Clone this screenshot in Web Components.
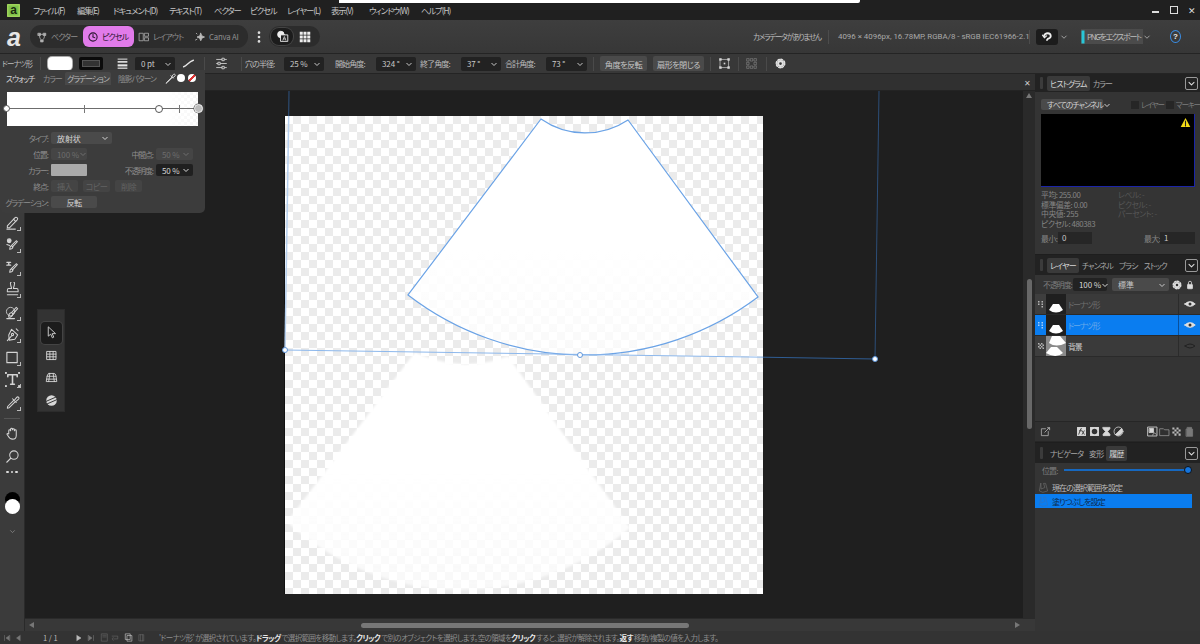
<!DOCTYPE html>
<html lang="ja"><head><meta charset="utf-8"><title>Affinity</title>
<style>html,body{margin:0;height:100%;background:#1f1f1f;overflow:hidden}app-shell{font-family:"Noto Sans CJK JP","Liberation Sans",sans-serif}</style>
</head><body><app-shell></app-shell>
<script>
const I={
vector:'<path d="M3 3h3v3H3zM10 3h3v3h-3zM6.500 12h3v2.500h-3z" fill="currentColor"/><path d="M6 4.500h4M4.500 6Q4.500 10 7 12M11.500 6Q11.500 10 9 12"/>',
pixel:'<circle cx="8" cy="8" r="5.500" stroke-width="1.400"/><path d="M8 8V4.500M8 8l2.500 1" stroke-width="1.300"/>',
layout:'<rect x="2" y="3" width="5" height="10"/><rect x="9" y="3" width="5" height="4"/><rect x="9" y="9" width="5" height="4"/>',
spark:'<path d="M9 3l1.500 3.500L14 8l-3.500 1.500L9 13 7.500 9.500 4 8l3.500-1.500z" fill="currentColor"/><path d="M3 3l1 1M2 12l2-1" />',
grid:'<g fill="currentColor" stroke="none"><rect x="1" y="1" width="4" height="4"/><rect x="6" y="1" width="4" height="4"/><rect x="11" y="1" width="4" height="4"/><rect x="1" y="6" width="4" height="4"/><rect x="6" y="6" width="4" height="4"/><rect x="11" y="6" width="4" height="4"/><rect x="1" y="11" width="4" height="4"/><rect x="6" y="11" width="4" height="4"/><rect x="11" y="11" width="4" height="4"/></g>',
mode:'<circle cx="6" cy="5.500" r="4" fill="currentColor"/><rect x="6" y="6" width="8.500" height="8" fill="#222" stroke="currentColor"/><path d="M8.500 12.500l1.800-4.500 1.800 4.500M9.200 11h2.200" stroke-width=".8"/>',
kebab:'<g fill="currentColor" stroke="none"><circle cx="8" cy="3" r="1.500"/><circle cx="8" cy="8" r="1.500"/><circle cx="8" cy="13" r="1.500"/></g>',
weight:'<g fill="currentColor" stroke="none"><rect x="2" y="2" width="12" height="1.200"/><rect x="2" y="5" width="12" height="2"/><rect x="2" y="9" width="12" height="2.600"/><rect x="2" y="13" width="12" height="1.500"/></g>',
stroke:'<path d="M2 12C6 11 8 6 14 4" stroke-width="1.700"/>',
sliders:'<path d="M2 3h12M2 8h12M2 13h12"/><g fill="#3a3a3a"><rect x="9" y="1.500" width="2.400" height="3"/><rect x="4" y="6.500" width="2.400" height="3"/><rect x="9" y="11.500" width="2.400" height="3"/></g>',
frame:'<path d="M3 3h10v10H3z" stroke-width=".8"/><g fill="currentColor" stroke="none"><rect x="1.500" y="1.500" width="3" height="3"/><rect x="11.500" y="1.500" width="3" height="3"/><rect x="1.500" y="11.500" width="3" height="3"/><rect x="11.500" y="11.500" width="3" height="3"/><rect x="7" y="7" width="2" height="2"/></g>',
dgrid:'<path d="M2 2h3v3H2zM6.500 2h3v3h-3zM11 2h3v3h-3zM2 6.500h3v3H2zM11 6.500h3v3h-3zM2 11h3v3H2zM6.500 11h3v3h-3zM11 11h3v3h-3z" stroke-width=".7" stroke-dasharray="1 .7"/>',
gear:'<circle cx="8" cy="8" r="6" stroke-width="2.400" stroke-dasharray="2.300 2.410"/><path fill-rule="evenodd" fill="currentColor" stroke="none" d="M8 3a5 5 0 1 0 0 10A5 5 0 0 0 8 3zM8 6a2 2 0 1 1 0 4 2 2 0 0 1 0-4z"/>',
drop:'<path d="M10 6L3.500 12.500 2.500 14l1.500-1L10.500 6.500M8.500 4.500l3 3M9.500 5.500l2-2.500a1.400 1.400 0 0 1 2 2l-2.500 2"/>',
undo:'<path d="M4 7Q5 3 9 3q4 0 4 3.500 0 2.500-4 4L8 12" stroke-width="2.400"/><path d="M2 5.500l2.500 3.500 3-2.500" stroke-width="1.600"/>',
eye:'<path d="M1 8Q8 1.500 15 8 8 14.500 1 8z" fill="currentColor"/><circle cx="8" cy="8" r="2" fill="#333" stroke="none"/>',
eyeoff:'<path d="M1.500 8Q8 2.500 14.500 8 8 13.500 1.500 8z" stroke-width="1.200"/>',
lock:'<rect x="4" y="7" width="8" height="7" rx="1" fill="currentColor"/><path d="M5.500 7V4.500a2.500 2.500 0 0 1 5 0V7" stroke-width="1.300"/>',
warn:'<path d="M8 1.500L15 14.500H1z" fill="#f4dc16" stroke="none"/><path d="M8 6v4.500M8 11.800v1.200" stroke="#222" stroke-width="1.600"/>',
chev:'<path d="M3.500 6L8 10.500 12.500 6" stroke-width="1.800"/>',
pencil:'<path d="M2.500 11.500L10.500 3a1.600 1.600 0 0 1 2.500 2.300L5 13.500H2.500z"/><path d="M9 4.500l2.500 2.500"/><path d="M2 15h9" stroke-dasharray="1.200 .8" stroke-width="1.200"/>',
mix:'<circle cx="4.500" cy="4" r="2" fill="currentColor"/><path d="M7 9l5-5 1.200 1L8 10.500zM7 9Q5 10 5 13q3 0 3.500-2.500"/><path d="M2 8l3 1"/>',
clone:'<path d="M2 2.500h4M4 2.500v3M2 5.500h4" stroke-width="1.400"/><path d="M7 9l5-5 1.200 1L8 10.500zM7 9Q5 10 5 13q3 0 3.500-2.500"/>',
stamp:'<path d="M6 2.500a2.200 2.200 0 1 1 4 0c0 2-1 3-1 4.500h3.500q1.500 0 1.500 2v1.500H2.500V9q0-2 1.500-2H7C7 5.500 6 4.500 6 2.500zM2.500 13.500h11"/>',
heal:'<path d="M7 8l5-5.500 1.500 1.300-5 5.700zM7 8Q3.500 9 4 13q3.500.500 4.500-3.500"/><circle cx="6" cy="7" r="4.500" stroke-width=".9"/><path d="M2 14.500h8" stroke-width="1.500"/>',
pen:'<path d="M7 2.500l6.500 6-3 4.500-6 1-.5-5.500z"/><circle cx="8" cy="8" r="1.200"/><path d="M2.500 14.500L7 9.500M12 2l2 2"/>',
rect:'<rect x="2" y="2.500" width="11" height="11" stroke-width="1.200"/>',
text:'<path d="M3 3h10M8 3v10M6 13h4M3 3v2M13 3v2" stroke-width="1.700"/><g fill="currentColor" stroke="none"><rect x="0" y="0" width="2" height="2"/><rect x="14" y="0" width="2" height="2"/><rect x="0" y="14" width="2" height="2"/><rect x="14" y="14" width="2" height="2"/></g>',
picker:'<path d="M9.500 5.500L3 12l-.5 2 2-.5 6.500-6.500M8 4l4 4M10.500 5l2-2.500a1.300 1.300 0 0 1 2 1.800L12 6.500"/>',
hand:'<path d="M4 8V5a1 1 0 0 1 2 0V3.500a1 1 0 0 1 2 0V4a1 1 0 0 1 2 0v1a1 1 0 0 1 2 0v5q0 4-4 4-3 0-4.500-3L2 8.500q.8-1.200 2 0z"/>',
zoom:'<circle cx="9.500" cy="6.500" r="4.500"/><path d="M6 10l-4 4" stroke-width="1.500"/>',
arrow:'<path d="M4 1.500v11l3-2.500 2 4.500 1.800-.8-2-4.300h3.700z"/>',
mesh:'<path d="M2.500 3h11v10h-11zM6 3v10M10 3v10M2.500 6.300h11M2.500 9.600h11"/>',
warp:'<path d="M5 3h6q2 0 2.500 3l1 7H1.500l1-6Q3 3 5 3zM6 3L4.500 13M10 3l1.500 10M2.500 6.500h11M2 10h12"/>',
blob:'<circle cx="8" cy="8" r="6.500" fill="currentColor" stroke="none"/><path d="M1.500 9L13 4M3 12L14.500 7" stroke="#333" stroke-width="1.200"/>',
edit:'<path d="M12 8v6H2V4h6"/><path d="M7 9l6.500-6.500M11 2.500h3v3" stroke-width="1.200"/>',
fx:'<rect x="1.500" y="1.500" width="13" height="13" fill="currentColor" stroke="none"/><path d="M4 12l3-8h1M5 7h3M9 7l3 5M12 7l-3 5" stroke="#333" stroke-width="1.200"/>',
maskc:'<rect x="1.500" y="1.500" width="13" height="13" fill="currentColor" stroke="none"/><circle cx="8" cy="8" r="4" fill="#333" stroke="none"/>',
hour:'<path d="M3 2h10v2L9.500 8 13 12v2H3v-2l3.500-4L3 4z" fill="currentColor"/>',
half:'<circle cx="8" cy="8" r="6.500"/><path d="M3.500 12.500L12.500 3.500A6.500 6.500 0 0 1 3.500 12.500z" fill="currentColor"/>',
pict:'<rect x="1.500" y="1.500" width="13" height="13" stroke-width="1.200"/><rect x="3.500" y="3.500" width="6" height="6" fill="currentColor"/><path d="M8 13l3-3 2 2" />',
folder:'<path d="M1.500 4h5l1.500 1.500h6.500v8.500h-13z"/>',
chk:'<g fill="currentColor" stroke="none"><path d="M2 2h3v3H2zM8 2h3v3H8zM5 5h3v3H5zM11 5h3v3h-3zM2 8h3v3H2zM8 8h3v3H8zM5 11h3v3H5zM11 11h3v3h-3z"/></g>',
trash:'<path d="M3.500 4.500h9V15h-9zM5 2h6v2.500H5z" fill="currentColor" opacity=".7"/>',
hist:'<path d="M4 2L2 13l5 2 7-2-3-11H8l2 6-5 2z"/>',
grip:'<path d="M2 2h3v3H2zM9 2h3v3H9zM9 7h3v3H9zM2 7h3v3H2zM9 12h3v3H9z" fill="currentColor" stroke="none"/>',
first:'<path d="M3 3v10M13 3L6 8l7 5z" fill="currentColor"/>',
prev:'<path d="M12 3L5 8l7 5z" fill="currentColor"/>',
next:'<path d="M4 3l8 5-8 5z" fill="currentColor"/>',
last:'<path d="M13 3v10M3 3l7 5-7 5z" fill="currentColor"/>',
page:'<path d="M3 1.500h10v13H3zM5 4h6M5 7h6"/>',
link:'<path d="M2 5.500h10v5H5M4 8l-2 2.500L4 13"/>',
pages:'<path d="M3 1.500h8v10H3zM6 4.500h8v10H6z" fill="#333"/>',
bin:'<path d="M4 3h8v11H4zM6 3v11M10 3v11"/>',
};
function def(name,css,html){customElements.define(name,class extends HTMLElement{connectedCallback(){if(this.shadowRoot)return;const r=this.attachShadow({mode:'open'});const h=typeof html==='function'?html(this):html;r.innerHTML='<style>'+css+'</style>'+h;}});}
function seq(items){let c=0;return items.map(([x,w,h,s])=>{const m=x-c;c=x+w;return `<div class="i" style="margin-left:${m}px;width:${w}px;${s||''}">${h}</div>`}).join('')}
const ic=(n,s,c)=>`<ui-icon name="${n}" size="${s||14}" ${c?`style="color:${c}"`:''}></ui-icon>`;
const palt='font-feature-settings:"palt";';
const iCss='.i{flex:none;display:flex;align-items:center;white-space:nowrap}';

def('ui-icon',':host{display:inline-flex;flex:none;line-height:0}svg{display:block}',
 e=>{const s=e.getAttribute('size')||14;return `<svg width="${s}" height="${s}" viewBox="0 0 16 16" fill="none" stroke="currentColor" stroke-width="1.100" stroke-linejoin="round" stroke-linecap="round">${I[e.getAttribute('name')]||''}</svg>`});

def('ui-select',`:host{display:flex;align-items:center;justify-content:space-between;height:100%;width:100%;box-sizing:border-box;padding:0 3px 0 6px;border-radius:2px;background:var(--b,#222);color:var(--f,#c8c8c8);font-size:8px;${palt}white-space:nowrap;letter-spacing:var(--ls,-.1px)}
 svg{width:8px;height:8px;flex:none}`,
 e=>`<span>${e.getAttribute('v')||''}</span><svg viewBox="0 0 16 16" fill="none" stroke="currentColor" stroke-width="2"><path d="M3 6l5 5 5-5"/></svg>`);

def('ui-btn',`:host{display:flex;align-items:center;justify-content:center;width:100%;height:100%;border-radius:2px;background:var(--b,#4a4a4a);color:var(--f,#c4c4c4);font-size:8.200px;letter-spacing:-.6px;${palt}white-space:nowrap}`,'<slot></slot>');

def('app-menubar',`:host{display:flex;height:20px;background:#202020;color:#c6c6c6;font-size:8.300px;letter-spacing:-1.050px;${palt}position:relative}${iCss}
 .strip{position:absolute;left:339px;top:0;width:521px;height:3px;background:#fff;border-radius:0 0 2px 0}
 .logo{width:13px;height:13px;background:#7fc24a;border-radius:1px;color:#1b2a10;font:bold 12px/12px "Liberation Sans",sans-serif;letter-spacing:0;display:flex;align-items:center;justify-content:center;box-shadow:inset 0 0 0 1.500px #9fd35a}`,
 ()=>`<div class="strip"></div>`+seq([[7,13,'<div class="logo">a</div>'],[33,32,'ファイル(F)'],[77,24,'編集(E)'],[113,43,'ドキュメント(D)'],[169,32,'テキスト(T)'],[214,24,'ベクター'],[250,24,'ピクセル'],[287,30,'レイヤー(L)'],[331,24,'表示(V)'],[369,40,'ウィンドウ(W)'],[421,30,'ヘルプ(H)'],
 [1151,12,'<div style="width:7px;height:2px;background:#ddd;margin:4px 0 0 1px"></div>'],[1169,12,'<div style="width:6px;height:6px;border:1px solid #ddd;margin-left:1px"></div>'],[1188,10,'<span style="font-size:9px;color:#ddd;letter-spacing:0">✕</span>']]));

def('app-toolbar',`:host{display:flex;height:33px;background:linear-gradient(#3e3e3e,#373737);border-bottom:1px solid #242424;color:#8e8e8e;font-size:8px;letter-spacing:-.9px;${palt}position:relative;align-items:center}${iCss}
 .pill{height:23px;background:#2c2c2c;border-radius:11px;display:flex;align-items:center;width:100%}
 .tab{display:flex;align-items:center;gap:3px;height:100%;flex:none;box-sizing:border-box}
 .act{background:#e17bea;color:#2a1530;border-radius:6px;height:21px}
 .logo{font:italic bold 25px/24px "Liberation Sans",sans-serif;color:#e6e6e6;letter-spacing:0}.sep{width:1px;height:14px;background:#4c4c4c}
 .dark{width:22px;height:17px;background:#1c1c1c;border-radius:3px;display:flex;align-items:center;justify-content:center;color:#eee;box-shadow:0 0 0 1px #444}
 .exp{width:100%;height:15px;background:#4b4b4b;display:flex;align-items:center;gap:3px;color:#bdbdbd;letter-spacing:-1.350px}.exp b{width:2px;height:12px;background:#29c7d8;margin-left:1px;flex:none;box-shadow:0 0 0 .5px #29c7d8}
 .help{width:11px;height:11px;border:1.400px solid #3a8ee6;border-radius:50%;color:#eee;font:bold 8px/11px "Liberation Sans",sans-serif;text-align:center;letter-spacing:0}`,
 ()=>seq([[7,16,'<span class="logo">a</span>'],
 [30,218,`<div class="pill"><div class="tab" style="width:53px;padding-left:6px">${ic('vector',12,'#b0b0b0')}ベクター</div><div class="tab act" style="width:51px;padding-left:4px">${ic('pixel',12)}ピクセル</div><div class="tab" style="width:52px;padding-left:4px">${ic('layout',12,'#aaa')}レイアウト</div><div class="tab" style="width:62px;padding-left:8px">${ic('spark',12,'#bbb')}<span style="letter-spacing:-.2px;font-size:7.800px">Canva AI</span></div></div>`],
 [252,10,ic('kebab',14,'#ddd')],
 [269,51,`<div class="pill" style="height:21px;gap:6px;padding-left:2px"><div class="dark" style="border-radius:8px">${ic('mode',13)}</div>${ic('grid',12,'#eee')}</div>`],
 [753,70,'<span style="color:#bcbcbc;font-size:7.500px;letter-spacing:-1.250px">カメラデータがありません</span>'],[828,1,'<div class="sep"></div>'],
 [838,184,'<span style="color:#a9a9a9;font:7.900px Roboto,sans-serif;letter-spacing:0">4096 × 4096px, 16.78MP, RGBA/8 - sRGB IEC61966-2.1</span>'],[1029,1,'<div class="sep"></div>'],
 [1036,22,`<div class="dark" style="box-shadow:none;height:16px">${ic('undo',12)}</div>`],[1060,8,ic('chev',8,'#aaa')],
 [1081,62,'<div class="exp"><b></b><span>PNGをエクスポート</span></div>'],[1143,8,ic('chev',8,'#aaa')],[1170,11,'<div class="help">?</div>']]));

def('app-contextbar',`:host{display:flex;height:19px;background:#383838;border-bottom:1px solid #242424;color:#bcbcbc;font-size:8px;letter-spacing:-.9px;${palt}position:relative}${iCss}
 .i{height:100%}.s{height:14px;width:100%}.sep{width:1px;height:14px;background:#4a4a4a}
 .sw{width:24px;height:13px;background:#fff;border-radius:4px;filter:blur(.6px);box-shadow:0 0 0 1px #aaa}.sk{width:24px;height:13px;background:#0b0b0b;border-radius:2px;display:flex;align-items:center;justify-content:center}.sk div{width:16px;height:5px;border:1px solid #555;background:#333}
 .b{height:15px;width:100%}`,
 ()=>{const sel=(x,w,v)=>[x,w,`<div class="s"><ui-select v="${v}"></ui-select></div>`],
 lab=(x,w,t)=>[x,w,t],sep=x=>[x,1,'<div class="sep"></div>'],btn=(x,w,t)=>[x,w,`<div class="b"><ui-btn>${t}</ui-btn></div>`],icn=(x,n,c,s)=>[x,14,ic(n,s||13,c)];
 return seq([[2,30,'<span style="font-size:7.500px;letter-spacing:-1px">ドーナツ形</span>'],sep(40),[48,24,'<div class="sw"></div>'],[79,24,'<div class="sk"><div></div></div>'],icn(116,'weight','#e4e4e4'),sel(135,40,'0 pt'),icn(182,'stroke','#e4e4e4'),sep(204),icn(215,'sliders','#cfcfcf'),sep(241),
 lab(245,32,'穴の半径:'),sel(284,40,'25 %'),lab(335,32,'開始角度:'),sel(376,40,'324 °'),lab(420,32,'終了角度:'),sel(461,40,'37 °'),lab(505,32,'合計角度:'),sel(546,41,'73 °'),sep(593),btn(600,47,'角度を反転'),btn(653,51,'扇形を閉じる'),sep(710),icn(718,'frame','#d8d8d8'),sep(738),icn(745,'dgrid','#888'),sep(766),icn(775,'gear','#e0e0e0',11)])});

def('app-tools',`:host{display:flex;flex-direction:column;align-items:center;width:25px;flex:none;box-sizing:border-box;background:#3b3b3b;border-right:1px solid #2a2a2a;padding-top:137px;color:#d4d4d4}
 .t{height:22.500px;display:flex;align-items:center;justify-content:center;position:relative;width:100%}
 .t.k::after{content:"";position:absolute;right:3px;bottom:3px;width:3px;height:3px;border-right:1px solid #bbb;border-bottom:1px solid #bbb}
 .hr{width:16px;height:1px;background:#555;margin:4px 0 4px}
 .dots{display:flex;gap:2px;margin-top:3px;height:4px}.dots i{width:2.500px;height:2.500px;background:#ddd;border-radius:50%}
 .ch{position:relative;width:16px;height:24px;margin-top:17px}.ch i{position:absolute;border-radius:50%;width:15px;height:15px;left:.5px}.ch .bk{background:#000;top:0}.ch .wh{background:#fff;top:7px}
 .more{color:#888;margin-top:0}`,
 ()=>['pencil','mix','clone','stamp','heal','pen','rect','text','picker'].map(n=>`<div class="t k">${ic(n,15)}</div>`).join('')+'<div class="hr"></div>'+['hand','zoom'].map(n=>`<div class="t">${ic(n,15)}</div>`).join('')+'<div class="dots"><i></i><i></i><i></i></div><div class="ch"><i class="bk"></i><i class="wh"></i></div><div class="more">'+ic('chev',7)+'</div>');

def('app-tabstrip',`:host{display:flex;height:16px;background:#303030;border-bottom:1px solid #232323;justify-content:flex-end;align-items:center;padding-right:4px;color:#ccc;font-size:8px}`,'<span>✕</span>');

def('app-canvas',`:host{display:block;position:relative;flex:1;background:#1f1f1f;overflow:hidden}
 .doc{position:absolute;left:260px;top:25px;width:478px;height:478px;background:repeating-conic-gradient(#ebebeb 0 25%,#fff 0 50%) 0 0/16px 16px;box-shadow:-1px 0 0 #111}
 svg{position:absolute;inset:0}`,
 `<div class="doc"></div><svg width="998" height="527" viewBox="25 91 998 527">
 <defs><linearGradient id="g1" gradientUnits="userSpaceOnUse" x1="0" y1="119" x2="0" y2="355"><stop offset=".55" stop-color="#fff"/><stop offset=".8" stop-color="#fff" stop-opacity=".85"/><stop offset="1" stop-color="#fff" stop-opacity=".7"/></linearGradient>
 <linearGradient id="g2" gradientUnits="userSpaceOnUse" x1="0" y1="353" x2="0" y2="592"><stop offset=".5" stop-color="#fff"/><stop offset=".75" stop-color="#fff" stop-opacity=".85"/><stop offset="1" stop-color="#fff" stop-opacity=".65"/></linearGradient>
 <filter id="soft" x="-5%" y="-5%" width="110%" height="110%"><feGaussianBlur stdDeviation=".8"/></filter></defs>
 <path d="M415 352A113 113 0 0 0 508 356L630 528A259 259 0 0 1 287 522Z" fill="url(#g2)" filter="url(#soft)"/>
 <path d="M541 119A77 77 0 0 0 628 120L758 297A289 289 0 0 1 408 295Z" fill="url(#g1)"/>
 <path d="M541 119A77 77 0 0 0 628 120L758 297A289 289 0 0 1 408 295Z" fill="none" stroke="#6ba3e6" stroke-width="1.200"/>
 <g fill="none"><path d="M289 91L288.700 116" stroke="#2f5482"/><path d="M288.700 116L285 350" stroke="#b5cfee" stroke-width="1.500"/><path d="M879 91L875 359" stroke="#2c4e78"/><path d="M285 350L763 357.200" stroke="#8db8ec"/><path d="M763 357.200L875 359" stroke="#2f5d94"/></g>
 <g fill="#fff" stroke="#5f97dc" stroke-width="1"><circle cx="285" cy="350" r="2.500"/><circle cx="580" cy="355" r="2.500"/><circle cx="875" cy="359" r="2.500"/></g></svg>`);

def('app-vscroll',`:host{display:block;width:12px;flex:none;background:#2a2a2a;position:relative;color:#777}
 .a{display:block;width:0;height:0;margin:2px auto 0;border:3px solid transparent;border-bottom:5px solid #777;border-top:0}.th{width:5px;height:150px;margin:181px auto 0;background:#686868;border-radius:3px}`,'<div class="a"></div><div class="th"></div>');

def('app-hscroll',`:host{display:flex;height:13px;background:#383838;align-items:center;border-top:1px solid #2a2a2a;box-sizing:border-box}
 .a{width:0;height:0;margin-left:4px;border:3px solid transparent;border-right:5px solid #777;border-left:0}.th{width:328px;height:5px;margin-left:327px;background:#777;border-radius:3px}.b{width:0;height:0;margin-left:326px;border:3px solid transparent;border-left:5px solid #777;border-right:0}`,'<div class="a"></div><div class="th"></div><div class="b"></div>');

def('ui-panel',`:host{display:flex;flex-direction:column;flex:none;background:#343434;overflow:hidden;box-sizing:border-box}
 .h{height:18px;background:#222;display:flex;align-items:center;padding-left:5px;flex:none;color:#a6a6a6;font-size:8px;letter-spacing:-.9px;${palt}}
 .g{width:3px;height:12px;background:#3b3b3b;border-radius:1px;margin-right:4px}
 .col{margin-left:auto;width:11px;height:11px;border:1px solid #999;border-radius:2px;margin-right:2px;display:flex;align-items:center;justify-content:center;color:#ddd}
 ::slotted([slot=tab]){padding:2px 3px;border-radius:2px;white-space:nowrap}`,
 e=>`<div class="h" style="${e.getAttribute('hh')?'height:'+e.getAttribute('hh')+'px':''}"><div class="g"></div><slot name="tab"></slot><div class="col">${ic('chev',9)}</div></div><slot></slot>`);

def('app-histogram',`:host{display:block;padding:7px 5px 0 6px;color:#868686;font-size:7.800px;letter-spacing:-.4px;${palt}}
 .top{display:flex;align-items:center;height:11px}.sel{width:62px;height:11px;--b:#4a4a4a;--f:#d0d0d0;--ls:-1.050px;flex:none}.cb{width:8px;height:8px;background:#262626;margin-right:2px;flex:none}.sp{width:28px;flex:none}.dim{color:#7d7d7d;white-space:nowrap;letter-spacing:-1.200px;flex:none;font-size:7.500px}.d1{width:21px}.d2{width:19px}
 .hist{height:73px;background:#000;margin-top:4px;border-right:1px solid #1b25a8;border-bottom:1px solid #1b25a8;display:flex;justify-content:flex-end;padding:3px;box-sizing:border-box}
 .st{display:grid;grid-template-columns:77px 1fr;margin-top:3px;line-height:9.500px}.r{color:#565656}
 .mm{display:flex;align-items:center;margin-top:4px;height:12px;white-space:nowrap}.in{height:12px;background:#262626;color:#c8c8c8;padding-left:4px;line-height:12px;box-sizing:border-box;font-size:8px}`,
 ()=>`<div class="top"><div class="sel"><ui-select v="すべてのチャンネル"></ui-select></div><div class="sp"></div><div class="cb"></div><span class="dim d1">レイヤー</span><div class="sp" style="width:4px"></div><div class="cb"></div><span class="dim d2">マーキー</span></div>
 <div class="hist">${ic('warn',11)}</div>
 <div class="st"><span>平均: 255.00</span><span class="r">レベル: -</span><span>標準偏差: 0.00</span><span class="r">ピクセル: -</span><span>中央値: 255</span><span class="r">パーセント: -</span><span>ピクセル: 480383</span><span></span></div>
 <div class="mm"><span style="width:17px">最小:</span><div class="in" style="width:34px">0</div><span style="margin-left:auto;width:16px">最大:</span><div class="in" style="width:35px">1</div></div>`);

def('layer-row',`:host{display:flex;height:21px;background:#3a3a3a;border-bottom:1px solid #2a2a2a;box-sizing:border-box;color:#6e6e6e;font-size:8px;letter-spacing:-1.200px;${palt}}
 :host([sel]){background:#0a7df0;color:#69a9ea}:host([bg]){color:#cfcfcf}
 .l{width:11px;display:flex;align-items:center;justify-content:center;color:#b5b5b5;background:#3e3e3e}:host([sel]) .l{background:#0a7df0;color:#a8cdf5}
 .th{width:20px;background:#1f1f1f;overflow:hidden;flex:none}:host([bg]) .th{background:#8a8a8a}
 .n{flex:1;padding-left:2px;display:flex;align-items:center}
 .e{width:21px;display:flex;align-items:center;justify-content:center;border-left:1px solid #2b2b2b;color:#dfdfdf}:host([bg]) .e{color:#1d1d1d}:host([sel]) .e{border-color:#0a4f9a}
 svg{display:block}`,
 e=>{const bg=e.hasAttribute('bg');const mound=bg?'<path d="M6 0h8l6 7Q10 12 3 7z" fill="#fff"/><path d="M5 11h6l6 6Q10 23 0 17z" fill="#fff"/>':'<path d="M7 10h6l4 6Q10 21 3 16z" fill="#fff"/>';
 return `<div class="l">${ic(bg?'chk':'grip',8)}</div><div class="th"><svg width="20" height="20" viewBox="0 0 20 20">${mound}</svg></div><div class="n"><slot></slot></div><div class="e">${ic(bg?'eyeoff':'eye',12)}</div>`});

def('app-layerctl',`:host{display:flex;align-items:center;height:19px;padding-left:8px;color:#7e7e7e;font-size:7.800px;letter-spacing:-.9px;${palt}white-space:nowrap;background:#343434}
 .lb{width:26px;flex:none}.a{width:34px;height:13px;margin-left:4px;--b:#222;--f:#d8d8d8;flex:none}.b{width:57px;height:13px;margin-left:5px;--b:#4a4a4a;--f:#c8c8c8;flex:none}.k{margin-left:3px;color:#ddd;display:flex}`,
 ()=>`<span class="lb">不透明度:</span><div class="a"><ui-select v="100 %"></ui-select></div><div class="b"><ui-select v="標準"></ui-select></div><div class="k" style="margin-left:3px">${ic('gear',10)}</div><div class="k">${ic('lock',10)}</div>`);

def('app-layerfoot',`:host{display:flex;align-items:center;height:21px;background:#303030;border-top:1px solid #262626;border-bottom:1px solid #262626;box-sizing:border-box;color:#d8d8d8;margin-top:auto}${iCss}`,
 ()=>seq([[5,11,ic('edit',11,'#bbb')],[41,11,ic('fx',11)],[54,11,ic('maskc',11)],[66,11,ic('hour',11)],[78,11,ic('half',11)],[112,11,ic('pict',11)],[124,11,ic('folder',11,'#999')],[136,11,ic('chk',11,'#bbb')],[149,11,ic('trash',11,'#999')]]));

def('app-history',`:host{display:block;flex:1;color:#bdbdbd;font-size:8px;letter-spacing:-.9px;${palt}}
 .pos{display:flex;align-items:center;height:14px;padding-left:7px;color:#7e7e7e}.lb{width:20px;flex:none}.tr{width:124px;height:2.500px;background:#1668c0;margin-left:2px;position:relative;flex:none}.tr i{position:absolute;right:-4px;top:-2.500px;width:6px;height:6px;border-radius:50%;background:#1574dc;border:1px solid #111}
 .row{height:14px;display:flex;align-items:center;padding-left:3px;gap:3px;white-space:nowrap;margin-right:8px}.row.s{background:#0a7df0;color:#0d2a4d}.row ui-icon{color:#666}.row.s ui-icon{color:#2c74c4}`,
 ()=>`<div class="pos"><span class="lb">位置:</span><div class="tr"><i></i></div></div><div class="row" style="margin-top:3px">${ic('hist',11)}現在の選択範囲を設定</div><div class="row s">${ic('hist',11)}塗りつぶしを設定</div>`);

def('app-panels',`:host{display:flex;flex-direction:column;width:165px;flex:none;gap:1px;background:#1e1e1e;font-size:8px;${palt}}
 .t{color:#a6a6a6}.on{background:#3a3a3a;color:#d6d6d6}
 ui-panel.a{height:180px}ui-panel.b{height:187px}ui-panel.c{flex:1}`,
 ()=>`<ui-panel class="a"><span slot="tab" class="on">ヒストグラム</span><span slot="tab" class="t">カラー</span><app-histogram></app-histogram></ui-panel>
 <ui-panel class="b" hh="20"><span slot="tab" class="on">レイヤー</span><span slot="tab" class="t">チャンネル</span><span slot="tab" class="t">ブラシ</span><span slot="tab" class="t">ストック</span>
 <app-layerctl></app-layerctl><layer-row>ドーナツ形</layer-row><layer-row sel>ドーナツ形</layer-row><layer-row bg>背景</layer-row><app-layerfoot></app-layerfoot></ui-panel>
 <ui-panel class="c" hh="20"><span slot="tab" class="t">ナビゲータ</span><span slot="tab" class="t">変形</span><span slot="tab" class="on">履歴</span><app-history></app-history></ui-panel>`);

def('app-statusbar',`:host{display:flex;height:13px;background:#333;color:#8e8e8e;font-size:7.500px;letter-spacing:-.6px;${palt}align-items:center;white-space:nowrap}${iCss}
 b{color:#e8e8e8;font-weight:700}`,
 ()=>seq([[3,8,ic('first',8,'#777')],[14,8,ic('prev',8,'#777')],[43,12,'<span style="color:#bbb;letter-spacing:0">1 / 1</span>'],[75,8,ic('next',8,'#bbb')],[87,8,ic('last',8,'#777')],[100,9,ic('page',9,'#666')],[111,9,ic('link',9,'#666')],[124,9,ic('pages',9,'#ccc')],[137,9,ic('bin',9,'#666')],
 [159,562,'<span>\'ドーナツ形\' が選択されています。<b>ドラッグ</b> で選択範囲を移動します。<b>クリック</b> で別のオブジェクトを選択します。空の領域を<b>クリック</b> すると、選択が解除されます。<b>返す</b> 移動/複製の値を入力します。</span>']]));

def('gradient-bar',`:host{display:block;height:34px;margin:7px 7px 0;position:relative;background:linear-gradient(90deg,#fff 0 84%,rgba(255,255,255,.75)),repeating-conic-gradient(#d8d8d8 0 25%,#fff 0 50%) 0 0/6px 6px}
 .ln{position:absolute;left:0;right:0;top:16px;height:1px;background:#6c6c6c}
 .tk{position:absolute;top:13px;width:1px;height:8px;background:#777}
 .st{position:absolute;border-radius:50%;box-sizing:border-box;border:1px solid #555;background:#fff}`,
 `<div class="ln"></div><div class="tk" style="left:77px"></div><div class="tk" style="left:172px"></div>
 <div class="st" style="left:-4px;top:13px;width:7px;height:7px"></div><div class="st" style="left:148px;top:13px;width:8px;height:8px"></div><div class="st" style="left:187px;top:12px;width:9px;height:9px;background:#bbb;border:1.500px solid #eee;box-shadow:0 0 0 .5px #555"></div>`);

def('fill-panel',`:host{display:block;width:205px;height:143px;background:#3c3c3c;border-radius:0 0 5px 5px;box-sizing:border-box;color:#8f8f8f;font-size:7.800px;letter-spacing:-1px;${palt}}
 ${iCss}
 .tabs{display:flex;align-items:center;height:14px;padding-top:1px}.act{background:#484848;padding:1px 0;color:#b8b8b8;border-radius:2px 2px 0 0;width:100%;text-align:center}
 .w{color:#d6d6d6}.dot{width:8px;height:8px;border-radius:50%;background:#fff}.no{background:linear-gradient(135deg,#fff 0 38%,#d33 38% 62%,#fff 62%)}
 .lb{text-align:right;white-space:nowrap}
 .gridbox{display:grid;grid-template-columns:48px 36px 1fr 37px;column-gap:3px;align-items:center;margin:4px 12px 0 0}
 .rowg{display:grid;grid-template-columns:48px auto;column-gap:3px;align-items:center;padding-right:12px}
 .sel{height:12px;--b:#4a4a4a;--f:#c8c8c8}.dim{--b:#454545;--f:#6e6e6e}.dark{--b:#202020;--f:#d8d8d8}.sw{height:12px;background:#a8a8a8;border-radius:1px}
 .g3{display:flex;gap:5px}.g3 div{width:27px;height:12px;--b:#444;--f:#626262}`,
 ()=>`<div class="tabs">`+seq([[6,26,'<span class="w">スウォッチ</span>'],[43,16,'カラー'],[65,46,'<span class="act">グラデーション</span>'],[118,36,'陰影パターン'],[164,13,ic('drop',13,'#ddd')],[177,8,'<div class="dot"></div>'],[188,8,'<div class="dot no"></div>']])+`</div>
 <gradient-bar></gradient-bar>
 <div class="rowg" style="margin-top:6px"><span class="lb">タイプ:</span><div class="sel" style="width:61px;--f:#d4d4d4"><ui-select v="放射状"></ui-select></div></div>
 <div class="gridbox"><span class="lb">位置:</span><div class="sel dim"><ui-select v="100 %"></ui-select></div><span class="lb">中間点:</span><div class="sel dim"><ui-select v="50 %"></ui-select></div></div>
 <div class="gridbox"><span class="lb">カラー:</span><div class="sw"></div><span class="lb">不透明度:</span><div class="sel dark"><ui-select v="50 %"></ui-select></div></div>
 <div class="rowg" style="margin-top:4px"><span class="lb">終点:</span><div class="g3"><div><ui-btn>挿入</ui-btn></div><div><ui-btn>コピー</ui-btn></div><div><ui-btn>削除</ui-btn></div></div></div>
 <div class="rowg" style="margin-top:4px"><span class="lb">グラデーション:</span><div style="width:46px;height:12px;--b:#4a4a4a;--f:#cfcfcf"><ui-btn>反転</ui-btn></div></div>`);

def('sub-tools',`:host{display:flex;flex-direction:column;align-items:center;width:26px;height:101px;background:#333;box-shadow:0 0 0 1px #2c2c2c;color:#d8d8d8;padding-top:12px;box-sizing:border-box;gap:1px}
 .b{width:21px;height:21.500px;display:flex;align-items:center;justify-content:center;border-radius:4px}.s{background:#1c1c1c;box-shadow:0 0 0 1px #444}`,
 ()=>`<div class="b s">${ic('arrow',13)}</div><div class="b">${ic('mesh',13)}</div><div class="b">${ic('warp',13)}</div><div class="b">${ic('blob',13)}</div>`);

def('app-shell',`:host{display:flex;flex-direction:column;width:1200px;height:644px;position:relative;overflow:hidden;background:#1f1f1f}
 .main{display:flex;height:557px}.center{display:flex;flex-direction:column;width:1010px;flex:none}.cv{display:flex;flex:1;min-height:0}
 fill-panel{position:absolute;left:0;top:70px}sub-tools{position:absolute;left:38px;top:310px}`,
 `<app-menubar></app-menubar><app-toolbar></app-toolbar><app-contextbar></app-contextbar>
 <div class="main"><app-tools></app-tools><div class="center"><app-tabstrip></app-tabstrip><div class="cv"><app-canvas></app-canvas><app-vscroll></app-vscroll></div><app-hscroll></app-hscroll></div><app-panels></app-panels></div>
 <app-statusbar></app-statusbar><fill-panel></fill-panel><sub-tools></sub-tools>`);
</script></body></html>
